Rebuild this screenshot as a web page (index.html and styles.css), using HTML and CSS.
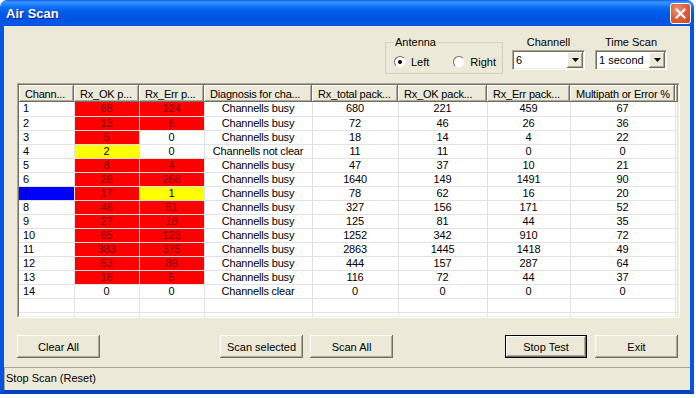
FILE: index.html
```html
<!DOCTYPE html>
<html lang="en">
<head>
    <meta charset="UTF-8">
    <title>Air Scan</title>
    <link rel="stylesheet" href="styles.css">
</head>
<body>

<div class="window">
    <div class="titlebar">
        <span class="title">Air Scan</span>
        <button class="close-btn">
            <svg width="11" height="11" viewBox="0 0 11 11">
                <path d="M1.5 1.5 L9.5 9.5 M9.5 1.5 L1.5 9.5" stroke="#fff" stroke-width="2.2" stroke-linecap="round"/>
            </svg>
        </button>
    </div>
    <div class="frame">
        <div class="client">
            <div class="options">
                <fieldset class="antenna">
                    <legend>Antenna</legend>
                    <label class="radio radio-left"><span class="radio-dot checked"></span>Left</label>
                    <label class="radio"><span class="radio-dot"></span>Right</label>
                </fieldset>
                <div class="field field-channel">
                    <div class="field-label">Channell</div>
                    <div class="combo combo-channel">
                        <span class="combo-text">6</span>
                        <span class="combo-btn"><svg width="7" height="4" viewBox="0 0 7 4"><polygon points="0,0 7,0 3.5,4" fill="#000"/></svg></span>
                    </div>
                </div>
                <div class="field field-time">
                    <div class="field-label">Time Scan</div>
                    <div class="combo combo-time">
                        <span class="combo-text">1 second</span>
                        <span class="combo-btn"><svg width="7" height="4" viewBox="0 0 7 4"><polygon points="0,0 7,0 3.5,4" fill="#000"/></svg></span>
                    </div>
                </div>
            </div>

            <div class="listview">
                <div class="listview-inner">
                    <table class="scan-table" id="scan-table">
                        <colgroup>
                            <col class="c-chan">
                            <col class="c-ok">
                            <col class="c-err">
                            <col class="c-diag">
                            <col class="c-total">
                            <col class="c-okp">
                            <col class="c-errp">
                            <col class="c-multi">
                            <col>
                        </colgroup>
                        <thead>
                            <tr>
                                <th>Chann...</th>
                                <th>Rx_OK p...</th>
                                <th>Rx_Err p...</th>
                                <th>Diagnosis for cha...</th>
                                <th>Rx_total pack...</th>
                                <th>Rx_OK pack...</th>
                                <th>Rx_Err pack...</th>
                                <th>Multipath or Error %</th>
                                <th></th>
                            </tr>
                        </thead>
                        <tbody>
                            <!-- rows are generated below -->
                        </tbody>
                    </table>
                </div>
            </div>

            <div class="button-row">
                <button class="btn">Clear All</button>
                <div class="btn-group btn-group-mid">
                    <button class="btn">Scan selected</button>
                    <button class="btn">Scan All</button>
                </div>
                <div class="btn-group btn-group-right">
                    <button class="btn btn-default">Stop Test</button>
                    <button class="btn">Exit</button>
                </div>
            </div>

            <div class="statusbar">Stop Scan (Reset)</div>
        </div>
    </div>
</div>

<script>
    // channel, rx_ok, rx_err, diagnosis, total, ok, err, multipath, colours
    const rows = [
        [1, 68, 124, "Channells busy", 680, 221, 459, 67, "", "red", "red"],
        [2, 13, 6, "Channells busy", 72, 46, 26, 36, "", "red", "red"],
        [3, 5, 0, "Channells busy", 18, 14, 4, 22, "", "red", ""],
        [4, 2, 0, "Channells not clear", 11, 11, 0, 0, "", "yellow", ""],
        [5, 8, 4, "Channells busy", 47, 37, 10, 21, "", "red", "red"],
        [6, 26, 266, "Channells busy", 1640, 149, 1491, 90, "", "red", "red"],
        [7, 17, 1, "Channells busy", 78, 62, 16, 20, "blue", "red", "yellow"],
        [8, 46, 51, "Channells busy", 327, 156, 171, 52, "", "red", "red"],
        [9, 27, 18, "Channells busy", 125, 81, 44, 35, "", "red", "red"],
        [10, 65, 123, "Channells busy", 1252, 342, 910, 72, "", "red", "red"],
        [11, 383, 375, "Channells busy", 2863, 1445, 1418, 49, "", "red", "red"],
        [12, 53, 89, "Channells busy", 444, 157, 287, 64, "", "red", "red"],
        [13, 16, 5, "Channells busy", 116, 72, 44, 37, "", "red", "red"],
        [14, 0, 0, "Channells clear", 0, 0, 0, 0, "", "", ""]
    ];

    const tbody = document.querySelector('#scan-table tbody');

    rows.forEach(function (r) {
        const tr = document.createElement('tr');
        const colours = [r[8], r[9], r[10]];
        for (let i = 0; i < 8; i++) {
            const td = document.createElement('td');
            td.innerText = r[i];
            if (i < 3 && colours[i]) td.className = 'cell-' + colours[i];
            tr.appendChild(td);
        }
        tr.appendChild(document.createElement('td'));
        tbody.appendChild(tr);
    });

    // empty rows under the data
    for (let n = 0; n < 2; n++) {
        const tr = document.createElement('tr');
        for (let i = 0; i < 9; i++) tr.appendChild(document.createElement('td'));
        tbody.appendChild(tr);
    }
</script>

</body>
</html>
```

FILE: styles.css
```css
body {
    margin: 0;
    background: #fff;
    color: #000;
    font-family: "Liberation Sans", Arial, sans-serif;
    font-size: 11px;
}

.window {
    width: 694px;
}

/* title bar */
.titlebar {
    height: 26px;
    display: flex;
    align-items: center;
    justify-content: space-between;
    border-radius: 7px 7px 0 0;
    background: linear-gradient(to bottom, #0a5ee8 0%, #3c93fb 8%, #2a86fb 16%, #0c6ef6 28%, #0260ec 42%, #0056e4 62%, #0054e3 84%, #0a5cea 94%, #0048d8 100%);
}

.title {
    padding-left: 6px;
    color: #fff;
    font-size: 13px;
    font-weight: bold;
    text-shadow: 1px 1px #0a1e8a;
}

.close-btn {
    width: 21px;
    height: 21px;
    margin-right: 3px;
    padding: 0;
    display: flex;
    align-items: center;
    justify-content: center;
    border: 1px solid #fff;
    border-radius: 3px;
    background: radial-gradient(circle at 35% 30%, #f29072 0%, #e0613f 45%, #c9431e 100%);
}

.frame {
    height: 368px;
    box-sizing: border-box;
    border: 4px solid #0055e5;
    border-top: 0;
    border-bottom-color: #0043c4;
}

.client {
    height: 364px;
    background: #ece9d8;
    display: flex;
    flex-direction: column;
}

/* antenna / channel / time scan */
.options {
    height: 57px;
    box-sizing: border-box;
    padding: 10px 23px 0 0;
    display: flex;
    justify-content: flex-end;
    align-items: flex-start;
}

.antenna {
    width: 118px;
    height: 38px;
    box-sizing: border-box;
    margin: 0 9px 0 0;
    padding: 2px 0 0 8px;
    border: 1px solid #d0d0bf;
    display: flex;
    align-items: center;
}

.antenna legend {
    padding: 0 1px;
    line-height: 13px;
}

.radio {
    display: flex;
    align-items: center;
    line-height: 13px;
}

.radio-left {
    margin-right: 24px;
}

.radio-dot {
    width: 12px;
    height: 12px;
    box-sizing: border-box;
    margin-right: 5px;
    border: 1px solid;
    border-color: #716f64 #f1efe2 #f1efe2 #716f64;
    border-radius: 50%;
    background: #fff;
    display: flex;
    align-items: center;
    justify-content: center;
}

.radio-dot.checked::after {
    content: "";
    width: 4px;
    height: 4px;
    border-radius: 50%;
    background: #000;
}

.field {
    display: flex;
    flex-direction: column;
    align-items: center;
}

.field-channel {
    margin-right: 10px;
}

.field-label {
    line-height: 13px;
    margin-bottom: 1px;
}

.combo {
    height: 20px;
    box-sizing: border-box;
    display: flex;
    align-items: stretch;
    border: 1px solid;
    border-color: #aca899 #fff #fff #aca899;
    box-shadow: inset 1px 1px #716f64, inset -1px -1px #f1efe2;
    background: #fff;
}

.combo-channel {
    width: 73px;
}

.combo-time {
    width: 72px;
}

.combo-text {
    flex: 1;
    padding-left: 3px;
    line-height: 18px;
    font-size: 11px;
}

.combo-btn {
    width: 16px;
    margin: 1px;
    display: flex;
    align-items: center;
    justify-content: center;
    background: #ece9d8;
    box-shadow: inset -1px -1px #716f64, inset 1px 1px #fff, inset -2px -2px #aca899;
}

/* list view */
.listview {
    width: 663px;
    height: 235px;
    box-sizing: border-box;
    margin-left: 13px;
    border: 1px solid;
    border-color: #aca899 #fff #fff #aca899;
}

.listview-inner {
    height: 100%;
    box-sizing: border-box;
    border: 1px solid;
    border-color: #716f64 #f1efe2 #f1efe2 #716f64;
    background: #fff;
    overflow: hidden;
}

.scan-table {
    width: 100%;
    table-layout: fixed;
    border-collapse: collapse;
    font-size: 11px;
    letter-spacing: -0.2px;
}

.c-chan { width: 55px; }
.c-ok { width: 65px; }
.c-err { width: 65px; }
.c-diag { width: 108px; }
.c-total { width: 86px; }
.c-okp { width: 89px; }
.c-errp { width: 83px; }
.c-multi { width: 105px; }

.scan-table th {
    height: 17px;
    padding: 0 0 0 6px;
    font-weight: normal;
    text-align: left;
    white-space: nowrap;
    overflow: hidden;
    background: #ece9d8;
    box-shadow: inset -1px -1px #716f64, inset 1px 1px #fff, inset -2px -2px #aca899;
}

.scan-table tr {
    height: 14px;
}

.scan-table td {
    padding: 0;
    line-height: 13px;
    text-align: center;
    white-space: nowrap;
    overflow: hidden;
    border-right: 1px solid #e2e2e2;
    border-bottom: 1px solid #e2e2e2;
}

.scan-table td:first-child {
    text-align: left;
    padding-left: 4px;
}

.cell-red {
    background: #ff0000;
    color: #800000;
}

.cell-yellow {
    background: #ffff00;
}

.cell-blue {
    background: #0000ff;
    color: #000080;
}

/* buttons */
.button-row {
    margin-top: 17px;
    padding: 0 12px 0 13px;
    display: flex;
}

.btn-group {
    display: flex;
    gap: 7px;
}

.btn-group-mid {
    margin-left: 120px;
}

.btn-group-right {
    margin-left: auto;
    gap: 8px;
}

.btn {
    width: 83px;
    height: 23px;
    padding: 0;
    border: 0;
    background: #ece9d8;
    font-family: "Liberation Sans", Arial, sans-serif;
    font-size: 11px;
    color: #000;
    box-shadow: inset -1px -1px #716f64, inset 1px 1px #fff, inset -2px -2px #aca899;
}

.btn-default {
    width: 82px;
    box-shadow: inset 0 0 0 1px #000, inset -2px -2px #716f64, inset 2px 2px #fff, inset -3px -3px #aca899;
}

/* status bar */
.statusbar {
    margin-top: 9px;
    flex: 1;
    padding-left: 1px;
    line-height: 20px;
    border-top: 1px solid #aca899;
    border-left: 1px solid #aca899;
    font-size: 11px;
}
```
